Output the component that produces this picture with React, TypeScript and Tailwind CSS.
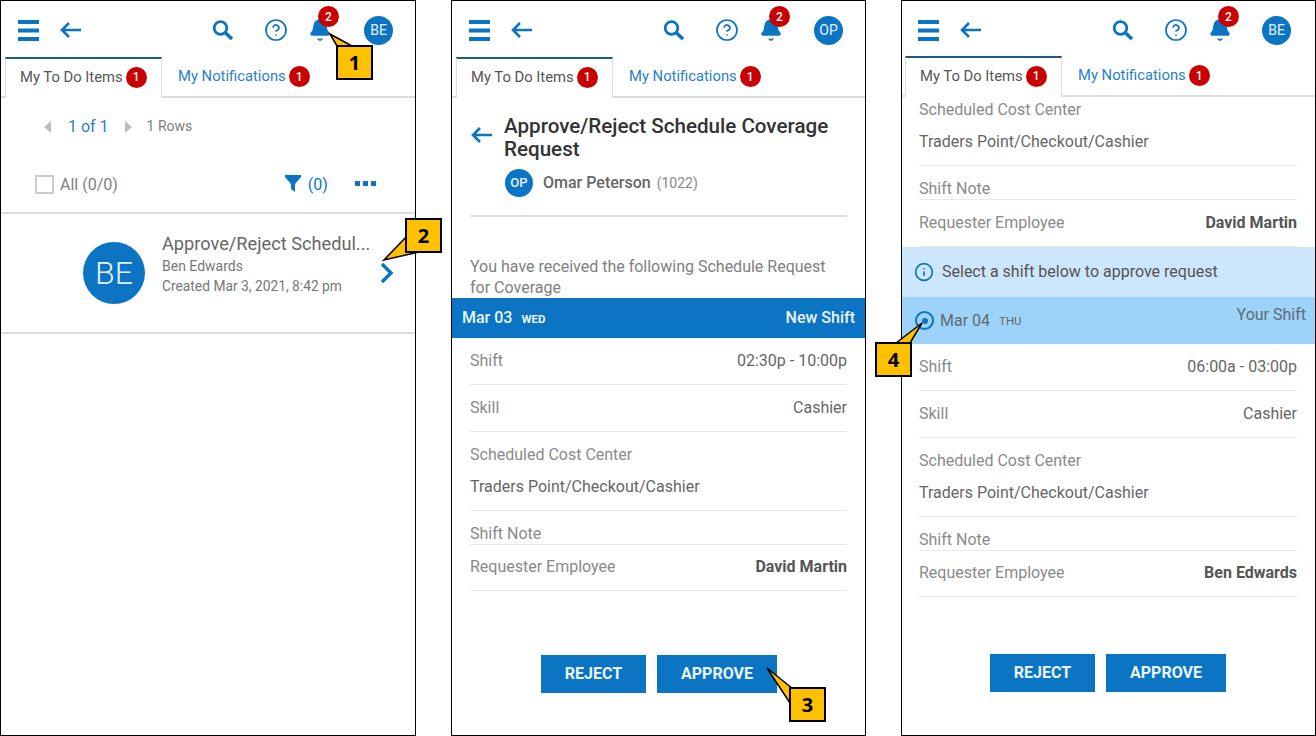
import { CircleHelp, Bell, Info } from "lucide-react";

const blue = "text-[#0b75c4]";

function Callout({ n, className, tail }: { n: number; className: string; tail: string }) {
  return (
    <div className={`absolute z-10 w-[37px] h-[35px] ${className}`}>
      <svg className="absolute overflow-visible left-0 top-0" width="37" height="35">
        <polygon points={tail} fill="#ffc000" stroke="#000" strokeWidth="1.5" />
      </svg>
      <div className="absolute inset-0 bg-[#ffc000] border-2 border-black flex items-center justify-center font-['Open_Sans',sans-serif] font-bold text-[20px] text-black">
        {n}
      </div>
    </div>
  );
}

function Badge({ n }: { n: number }) {
  return (
    <span className="w-[21px] h-[21px] rounded-full bg-[#c90000] text-white text-[12px] font-medium flex items-center justify-center">
      {n}
    </span>
  );
}

function BackArrow({ className }: { className: string }) {
  return (
    <svg className={`${blue} shrink-0 ${className}`} width="21" height="16" viewBox="0 0 21 16" fill="none" stroke="currentColor" strokeWidth="2.6">
      <path d="M21 8H2M9 1 2 8l7 7" />
    </svg>
  );
}

function Header({ initials, avatarClass = "ml-[32px]" }: { initials: string; avatarClass?: string }) {
  return (
    <div className="h-[56px] flex items-center pt-[2px] shrink-0">
      <svg className={`ml-[17px] ${blue}`} width="21" height="21" viewBox="0 0 21 21" fill="currentColor">
        <path d="M0 0h21v4H0zM0 8.5h21v4H0zM0 17h21v4H0z" />
      </svg>
      <BackArrow className="ml-[21px]" />
      <svg className={`ml-[131px] ${blue}`} width="22" height="20" viewBox="0 0 22 20" fill="none" stroke="currentColor">
        <circle cx="8.5" cy="8" r="6.3" strokeWidth="2.8" />
        <path d="M13 12.5l7 6.5" strokeWidth="3.6" />
      </svg>
      <CircleHelp className={`ml-[30px] ${blue}`} size={24} strokeWidth={1.7} />
      <div className="relative ml-[20px] w-[24px] h-[24px]">
        <Bell className={blue} size={24} fill="currentColor" strokeWidth={1.5} />
        <span className="absolute -top-[12px] left-[10px]">
          <Badge n={2} />
        </span>
      </div>
      <div className={`${avatarClass} w-[29px] h-[29px] rounded-full bg-[#0b75c4] text-[#e6f1fa] text-[14px] flex items-center justify-center`}>
        {initials}
      </div>
    </div>
  );
}

function Tabs() {
  return (
    <div className="h-[41px] flex border-b-2 border-[#dddddd] shrink-0">
      <div className="ml-[4px] w-[157px] h-[41px] border-t-2 border-t-[#1d5a85] border-x border-x-[#dddddd] bg-white flex items-center pl-[14px] pb-[3px] gap-[3px] text-[14.8px] text-[#555555]">
        My To Do Items <Badge n={1} />
      </div>
      <div className="flex items-center pl-[16px] gap-[3px] text-[14.8px] text-[#2a7fc4]">
        My Notifications <Badge n={1} />
      </div>
    </div>
  );
}

function Row({ label, value, bold, h = 47 }: { label: string; value?: string; bold?: boolean; h?: number }) {
  return (
    <div className="mx-[18px] pb-[1px] border-b border-[#e8e8e8] flex items-center justify-between text-[16px] text-[#8a8a8a]" style={{ height: h }}>
      <span>{label}</span>
      {value && <span className={bold ? "font-bold text-[#555555]" : "text-[#666666]"}>{value}</span>}
    </div>
  );
}

function ShiftNote() {
  return (
    <div className="mx-[18px] border-b border-[#e8e8e8] h-[34px] flex items-end text-[16px] leading-[21px] text-[#8a8a8a]">Shift Note</div>
  );
}

function CostCenter() {
  return (
    <div className="mx-[18px] border-b border-[#e8e8e8] h-[79px] text-[16px]">
      <div className="h-[45px] flex items-center text-[#8a8a8a]">Scheduled Cost Center</div>
      <div className="h-[19px] flex items-center text-[#666666]">Traders Point/Checkout/Cashier</div>
    </div>
  );
}

function Details({ requester, shift }: { requester: string; shift: string }) {
  return (
    <>
      <Row label="Shift" value={shift} />
      <Row label="Skill" value="Cashier" />
      <CostCenter />
      <ShiftNote />
      <Row label="Requester Employee" value={requester} bold h={46} />
    </>
  );
}

function Actions({ className }: { className: string }) {
  return (
    <div className={`flex gap-[11px] font-bold text-[16px] text-[#eaf4fb] ${className}`}>
      <div className="w-[105px] h-[38px] bg-[#0b75c4] flex items-center justify-center">REJECT</div>
      <div className="w-[120px] h-[38px] bg-[#0b75c4] flex items-center justify-center">APPROVE</div>
    </div>
  );
}

function Panel({ width, children }: { width: number; children: React.ReactNode }) {
  return (
    <div className="relative h-[736px] border border-black bg-white flex flex-col overflow-hidden shrink-0" style={{ width }}>
      {children}
    </div>
  );
}

export default function App() {
  return (
    <div className="relative w-[1316px] h-[736px] bg-white flex gap-[35px] overflow-hidden font-['Roboto',sans-serif]">
      <Panel width={416}>
        <Header initials="BE" />
        <Tabs />
        <div className="h-[57px] flex items-center pl-[43px] shrink-0">
          <span className="w-0 h-0 border-y-[6px] border-y-transparent border-r-[7px] border-r-[#bbbbbb]" />
          <span className="ml-[17px] text-[16px] text-[#2a7fc4]">1 of 1</span>
          <span className="ml-[16px] w-0 h-0 border-y-[6px] border-y-transparent border-l-[7px] border-l-[#bbbbbb]" />
          <span className="ml-[15px] text-[14px] text-[#808080]">1 Rows</span>
        </div>
        <div className="h-[59px] flex items-center pl-[34px] pt-[2px] border-b-2 border-[#dddddd] shrink-0">
          <span className="w-[19px] h-[19px] border-2 border-[#cccccc]" />
          <span className="ml-[6px] text-[16px] text-[#808080]">All (0/0)</span>
          <svg className="ml-[167px] -mt-[3px]" width="16" height="17" viewBox="0 0 16 17">
            <path d="M0 0h16v2L10 9v8l-4-3V9L0 2z" fill="#0b75c4" />
          </svg>
          <span className={`ml-[7px] text-[16px] ${blue}`}>(0)</span>
          <span className="ml-[27px] -mt-[3px] flex gap-[3px]">
            <span className="w-[5px] h-[5px] bg-[#0b75c4]" />
            <span className="w-[5px] h-[5px] bg-[#0b75c4]" />
            <span className="w-[5px] h-[5px] bg-[#0b75c4]" />
          </span>
        </div>
        <div className="h-[120px] flex items-center border-b-2 border-[#dddddd] pl-[82px] shrink-0">
          <div className="w-[62px] h-[62px] rounded-full bg-[#0b75c4] text-[#e6f1fa] text-[32px] font-light flex items-center justify-center">
            BE
          </div>
          <div className="ml-[17px] mb-[18px] w-[218px] text-[#777777]">
            <div className="text-[18.2px] text-[#666666] leading-[24px]">Approve/Reject Schedul...</div>
            <div className="text-[14px] leading-[20px]">Ben Edwards</div>
            <div className="text-[13.8px] leading-[20px]">Created Mar 3, 2021, 8:42 pm</div>
          </div>
          <svg className={blue} width="14" height="22" viewBox="0 0 14 22" fill="none" stroke="currentColor" strokeWidth="3.4">
            <path d="M2 2l9 9-9 9" />
          </svg>
        </div>
        <Callout n={1} className="left-[335px] top-[44px]" tail="1,1 -6,-11 16,1" />
      </Panel>

      <Panel width={415}>
        <Header initials="OP" avatarClass="ml-[31px]" />
        <Tabs />
        <div className="mx-[18px] h-[119px] border-b-2 border-[#dddddd] flex shrink-0">
          <BackArrow className="ml-[1px] mt-[29px]" />
          <div className="ml-[12px] mt-[17px]">
            <div className="text-[20.6px] leading-[23px] font-medium text-[#333333]">Approve/Reject Schedule Coverage Request</div>
            <div className="flex items-center mt-[8px]">
              <div className="ml-[1px] w-[28px] h-[28px] rounded-full bg-[#0b75c4] text-[#e6f1fa] text-[13px] font-medium flex items-center justify-center">OP</div>
              <span className="ml-[10px] text-[16px] font-medium text-[#666666]">Omar Peterson</span>
              <span className="ml-[6px] text-[14px] text-[#888888]">(1022)</span>
            </div>
          </div>
        </div>
        <div className="mx-[18px] h-[81px] pt-[39px] text-[16px] leading-[21px] text-[#808080] shrink-0">
          You have received the following Schedule Request for Coverage
        </div>
        <div className="h-[40px] bg-[#0b75c4] flex items-center justify-between px-[10px] text-[#eaf4fb] font-medium text-[16px] shrink-0">
          <span>Mar 03 <span className="ml-[5px] text-[11.5px] font-bold">WED</span></span>
          <span>New Shift</span>
        </div>
        <Details requester="David Martin" shift="02:30p - 10:00p" />
        <Actions className="ml-[89px] mt-[64px]" />
        <Callout n={3} className="left-[337px] top-[686px]" tail="1,16 -22,-19 4,2" />
      </Panel>

      <Panel width={415}>
        <div className="-ml-[1px] flex flex-col">
          <Header initials="BE" avatarClass="ml-[30px]" />
          <div className="-mt-[1px]"><Tabs /></div>
          <div className="mx-[18px] border-b border-[#e8e8e8] h-[69px] pt-[1px] text-[16px] shrink-0">
            <div className="h-[24px] flex items-center text-[#8a8a8a]">Scheduled Cost Center</div>
            <div className="h-[40px] flex items-center text-[#666666]">Traders Point/Checkout/Cashier</div>
          </div>
          <ShiftNote />
          <Row label="Requester Employee" value="David Martin" bold h={47} />
          <div className="h-[50px] -mr-[1px] bg-[#cce6fb] flex items-center pl-[13px] text-[16px] text-[#555555] shrink-0">
            <Info className={blue} size={20} strokeWidth={2} />
            <span className="ml-[8px]">Select a shift below to approve request</span>
          </div>
          <div className="h-[47px] -mr-[1px] bg-[#9dd2f9] flex justify-between pl-[14px] pr-[10px] text-[16px] text-[#5f6b75] shrink-0">
            <span className="flex items-center">
              <span className="w-[19px] h-[19px] rounded-full border-2 border-[#0b75c4] flex items-center justify-center">
                <span className="w-[6px] h-[6px] rounded-full bg-[#0b75c4]" />
              </span>
              <span className="ml-[6px]">Mar 04</span>
              <span className="ml-[9px] text-[11.5px] mt-[2px]">THU</span>
            </span>
            <span className="mt-[6px]">Your Shift</span>
          </div>
          <Details requester="Ben Edwards" shift="06:00a - 03:00p" />
          <Actions className="ml-[89px] mt-[57px]" />
        </div>
      </Panel>

      <Callout n={2} className="left-[405px] top-[218px]" tail="2,18 -21,42 14,34" />
      <Callout n={4} className="left-[875px] top-[342px]" tail="21,1 47,-19 35,1" />
    </div>
  );
}
